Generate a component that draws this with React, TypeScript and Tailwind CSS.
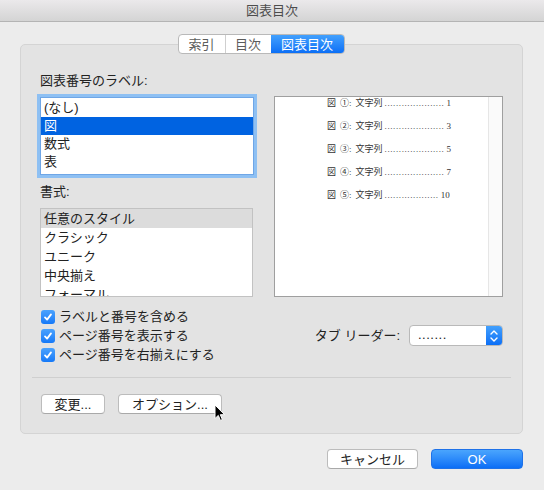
import React from "react";

const FONT = { fontFamily: '"Liberation Sans", "Noto Sans CJK JP", sans-serif' };
const SERIF = { fontFamily: '"Liberation Serif", "Noto Sans CJK JP", serif' };

const LABELS = ["(なし)", "図", "数式", "表"];
const FORMATS = ["任意のスタイル", "クラシック", "ユニーク", "中央揃え", "フォーマル"];
const CHECKS = ["ラベルと番号を含める", "ページ番号を表示する", "ページ番号を右揃えにする"];
const PREVIEW = [
  { mark: "①", page: "1", dots: "....................." },
  { mark: "②", page: "3", dots: "....................." },
  { mark: "③", page: "5", dots: "....................." },
  { mark: "④", page: "7", dots: "....................." },
  { mark: "⑤", page: "10", dots: "..................." },
];

function Check() {
  return (
    <span className="flex h-[14px] w-[14px] shrink-0 items-center justify-center rounded-[3px] bg-linear-to-b from-[#4aa2fd] to-[#1479f8]">
      <svg width="10" height="10" viewBox="0 0 10 10" aria-hidden>
        <path d="M2 5.4 L4.1 7.6 L8 2.4" fill="none" stroke="#fff" strokeWidth="1.8" strokeLinecap="round" strokeLinejoin="round" />
      </svg>
    </span>
  );
}

function Button({ children, w }: { children: React.ReactNode; w: string }) {
  return (
    <button
      className={`flex h-[20px] ${w} items-center justify-center rounded-[4px] border border-[#bcbcbc] border-b-[#a9a9a9] bg-white text-[13px] leading-none text-[#222]`}
    >
      {children}
    </button>
  );
}

export default function App() {
  return (
    <div className="relative h-[490px] w-[544px] overflow-hidden bg-[#ececec] text-[#222]" style={FONT}>
      {/* title bar */}
      <div className="flex h-[22px] items-center justify-center border-b border-[#b4b4b4] bg-linear-to-b from-[#ebe9eb] to-[#d4d4d4] text-[13px] text-[#4d4d4d]">
        図表目次
      </div>

      {/* tabs */}
      <div className="relative z-10 mt-[12px] -mb-[10px] flex justify-center pr-[22px]">
        <div className="flex h-[20px] overflow-hidden rounded-[4px] border border-[#b9b9b9] bg-white text-[13px] leading-none">
          <div className="flex w-[47px] items-center justify-center border-r border-[#cfcfcf] text-[#5c5c5c]">索引</div>
          <div className="flex w-[45px] items-center justify-center text-[#5c5c5c]">目次</div>
          <div className="flex w-[73px] items-center justify-center bg-linear-to-b from-[#42a0fd] to-[#0b6ff6] text-white">図表目次</div>
        </div>
      </div>

      {/* group box */}
      <div className="ml-[20px] h-[390px] w-[503px] rounded-[5px] border border-[#d4d4d4] bg-[#e3e3e3] pl-[19px] pr-[19px] pt-[28px]">
        <div className="flex gap-[20px]">
          <div className="w-[214px]">
            <div className="h-[16px] text-[13px] leading-[16px]">図表番号のラベル:</div>
            <div className="mt-[8px] h-[78px] border border-[#6fa6e6] bg-white pt-[1px] shadow-[0_0_0_3px_#8ec0f3]">
              {LABELS.map((l, i) => (
                <div
                  key={l}
                  className={`flex h-[18px] items-center pl-[3px] text-[13px] ${i === 1 ? "bg-[#0063e1] text-white" : ""}`}
                >
                  {l}
                </div>
              ))}
            </div>
            <div className="mt-[9px] h-[16px] text-[13px] leading-[16px]">書式:</div>
            <div className="mt-[8px] h-[89px] w-[213px] overflow-hidden border border-[#c2c2c2] bg-white">
              {FORMATS.map((f, i) => (
                <div
                  key={f}
                  className={`flex h-[19px] shrink-0 items-center pl-[3px] text-[13px] ${i === 0 ? "bg-[#dcdcdc]" : ""}`}
                >
                  {f}
                </div>
              ))}
            </div>
          </div>

          <div className="w-[229px] pt-[23px]">
            <div className="flex h-[201px] border border-[#9f9f9f] bg-white">
              <div className="flex flex-1 flex-col gap-[11px] pl-[52px] text-[9px] leading-[12px] text-[#333]" style={SERIF}>
                {PREVIEW.map((p) => (
                  <div key={p.mark} className="flex h-[12px] items-end whitespace-nowrap">
                    <span>図</span>
                    <span className="ml-[4px]">{p.mark}:</span>
                    <span className="ml-[4px]">文字列</span>
                    <span className="ml-[2px] mr-[2px] tracking-[0.6px]">{p.dots}</span>
                    <span>{p.page}</span>
                  </div>
                ))}
              </div>
              <div className="w-[14px] border-l border-[#e6e6e6] bg-[#fafafa]" />
            </div>
          </div>
        </div>

        {/* checkboxes + tab leader */}
        <div className="mt-[10px] flex items-center justify-between">
          <div className="flex flex-col pl-[1px]">
            {CHECKS.map((c) => (
              <div key={c} className="flex h-[19px] items-center gap-[4px] text-[13px]">
                <Check />
                <span>{c}</span>
              </div>
            ))}
          </div>
          <div className="flex items-center gap-[9px]">
            <span className="text-[13px]">タブ リーダー:</span>
            <div className="flex h-[21px] w-[94px] overflow-hidden rounded-[4px] border border-[#b9b9b9] bg-white">
              <div className="flex flex-1 items-end pb-[4px] pl-[8px] text-[13px] leading-none tracking-[0.5px]">.......</div>
              <div className="flex w-[16px] flex-col items-center justify-center gap-[2px] bg-linear-to-b from-[#42a0fd] to-[#0b6ff6]">
                <svg width="8" height="5" viewBox="0 0 8 5" aria-hidden>
                  <path d="M1 4 L4 1 L7 4" fill="none" stroke="#fff" strokeWidth="1.4" strokeLinecap="round" strokeLinejoin="round" />
                </svg>
                <svg width="8" height="5" viewBox="0 0 8 5" aria-hidden>
                  <path d="M1 1 L4 4 L7 1" fill="none" stroke="#fff" strokeWidth="1.4" strokeLinecap="round" strokeLinejoin="round" />
                </svg>
              </div>
            </div>
          </div>
        </div>

        <div className="-mx-[8px] mt-[13px] h-px bg-[#cfcfcf]" />

        <div className="mt-[16px] flex gap-[13px] pl-[1px]">
          <Button w="w-[64px]">変更...</Button>
          <Button w="w-[104px]">オプション...</Button>
        </div>
      </div>

      {/* dialog buttons */}
      <div className="mt-[15px] flex justify-end gap-[13px] pr-[21px]">
        <Button w="w-[91px]">キャンセル</Button>
        <button className="flex h-[20px] w-[92px] items-center justify-center rounded-[4px] border border-[#1f72e8] bg-linear-to-b from-[#4aa5fd] to-[#0a6ef6] text-[13px] leading-none text-white">
          OK
        </button>
      </div>

      {/* mouse cursor */}
      <svg className="absolute left-[214px] top-[404px]" width="12" height="18" viewBox="0 0 12 18" aria-hidden>
        <path d="M1 1 L1 14.5 L4.3 11.4 L6.4 16.4 L8.4 15.6 L6.3 10.7 L10.6 10.7 Z" fill="#000" stroke="#fff" strokeWidth="1" strokeLinejoin="round" />
      </svg>
    </div>
  );
}
